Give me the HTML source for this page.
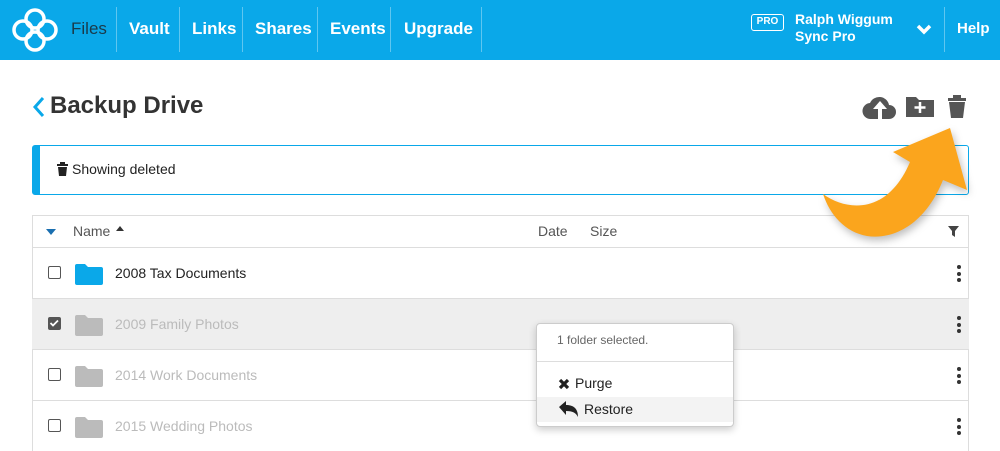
<!DOCTYPE html>
<html><head><style>
*{margin:0;padding:0;box-sizing:border-box}
body{width:1000px;height:451px;overflow:hidden;background:#fff;font-family:"Liberation Sans",sans-serif;position:relative;color:#333}
.nav{position:absolute;left:0;top:0;width:1000px;height:60px;background:#0aa8e9}
.nav .it{position:absolute;top:0;height:60px;line-height:58px;color:#fff;font-size:17px;font-weight:bold}
.sep{position:absolute;top:7px;width:1px;height:45px;background:rgba(255,255,255,.35)}
.abs{position:absolute}
.row{position:absolute;left:32px;width:937px;height:51px;border-top:1px solid #ddd;font-size:14px}
.cb{position:absolute;left:16px;top:18px;width:13px;height:13px;border:1.5px solid #555;border-radius:2px;background:#fff}
.fold{position:absolute;left:43px;top:15px;width:28px;height:22px}
.nm{position:absolute;left:83px;top:17px}
.dots{position:absolute;right:8px;top:17px;width:4px}
.dots i{display:block;width:4px;height:4px;border-radius:2px;background:#333;margin-bottom:2.5px}
</style></head><body>
<div class="nav">
 <svg class="abs" style="left:11px;top:7px" width="48" height="46" viewBox="0 0 48 46" fill="none" stroke="#fff" stroke-width="3.5">
  <circle cx="24" cy="12" r="9"/><circle cx="12" cy="23" r="9"/><circle cx="36" cy="23" r="9"/><circle cx="24" cy="34" r="9"/>
 </svg>
 <div class="it" style="left:71px;color:#1a3a4a;font-weight:normal">Files</div>
 <div class="sep" style="left:116px"></div>
 <div class="it" style="left:129px">Vault</div>
 <div class="sep" style="left:179px"></div>
 <div class="it" style="left:192px">Links</div>
 <div class="sep" style="left:242px"></div>
 <div class="it" style="left:255px">Shares</div>
 <div class="sep" style="left:317px"></div>
 <div class="it" style="left:330px">Events</div>
 <div class="sep" style="left:390px"></div>
 <div class="it" style="left:404px">Upgrade</div>
 <div class="sep" style="left:481px"></div>
 <div class="abs" style="left:751px;top:14px;width:33px;height:17px;border:1.5px solid #fff;border-radius:3px;color:#fff;font-size:10px;font-weight:bold;text-align:center;line-height:14px">PRO</div>
 <div class="abs" style="left:795px;top:11px;color:#fff;font-size:14px;font-weight:bold;line-height:17px">Ralph Wiggum<br>Sync Pro</div>
 <svg class="abs" style="left:916px;top:24px" width="16" height="11" viewBox="0 0 16 11"><path d="M2 2l6 6 6-6" stroke="#fff" stroke-width="3.5" fill="none"/></svg>
 <div class="sep" style="left:944px"></div>
 <div class="it" style="left:957px;font-size:15px">Help</div>
</div>
<svg class="abs" style="left:32px;top:96px" width="14" height="22" viewBox="0 0 14 22"><path d="M11 2L3 11l8 9" stroke="#0aa8e9" stroke-width="3" fill="none"/></svg>
<div class="abs" style="left:50px;top:92px;font-size:24px;font-weight:bold;color:#333">Backup Drive</div>
<svg class="abs" style="left:862px;top:94px" width="36" height="26" viewBox="0 0 36 26"><path d="M9 25a8 8 0 0 1-1-16 10 10 0 0 1 19 2 7 7 0 0 1 0 14z" fill="#555"/><path d="M18 7l-7 8h5v10h4V15h5z" fill="#fff"/></svg>
<svg class="abs" style="left:905px;top:94px" width="30" height="24" viewBox="0 0 30 24"><path d="M1 3h10l3 3h15v17H1z" fill="#555"/><path d="M15 8v11M9.5 13.5h11" stroke="#fff" stroke-width="2.5"/></svg>
<svg class="abs" style="left:946px;top:93px" width="22" height="26" viewBox="0 0 22 26"><path d="M2 5h18v3H2zM7 2h8v3H7z" fill="#555"/><path d="M3 9h16l-2 16H5z" fill="#555"/></svg>
<div class="abs" style="left:32px;top:145px;width:937px;height:50px;border:1px solid #0aa8e9;border-left:8px solid #0aa8e9;border-radius:3px"></div>
<svg class="abs" style="left:57px;top:162px" width="11" height="14" viewBox="0 0 11 14"><path d="M0 2h11v2H0zM3 0h5v2H3zM1 5h9l-1 9H2z" fill="#222"/></svg>
<div class="abs" style="left:72px;top:161px;font-size:14px;color:#222">Showing deleted</div>
<div class="abs" style="left:32px;top:215px;width:937px;height:236px;border:1px solid #ddd;border-bottom:none"></div>
<svg class="abs" style="left:46px;top:229px" width="10" height="6"><path d="M0 0h10L5 6z" fill="#1a6fb0"/></svg>
<div class="abs" style="left:73px;top:223px;font-size:14px;color:#555">Name</div>
<svg class="abs" style="left:116px;top:226px" width="8" height="5"><path d="M0 5h8L4 0z" fill="#333"/></svg>
<div class="abs" style="left:538px;top:223px;font-size:14px;color:#555">Date</div>
<div class="abs" style="left:590px;top:223px;font-size:14px;color:#555">Size</div>
<svg class="abs" style="left:948px;top:226px" width="11" height="11"><path d="M0 0h11L7 5v6L4 9V5z" fill="#444"/></svg>

<div class="row" style="top:247px"><div class="cb"></div>
<svg class="fold" viewBox="0 0 28 22"><path d="M0 3a2 2 0 0 1 2-2h8l3 3h13a2 2 0 0 1 2 2v14a2 2 0 0 1-2 2H2a2 2 0 0 1-2-2z" fill="#0aa8e9"/></svg>
<div class="nm" style="color:#222">2008 Tax Documents</div><div class="dots"><i></i><i></i><i></i></div></div>
<div class="row" style="top:298px;background:#eee"><div class="cb" style="background:#555;border-color:#555"><svg width="10" height="10" style="position:absolute;left:0;top:0"><path d="M1.5 5l2.5 2.5 5-5" stroke="#fff" stroke-width="1.8" fill="none"/></svg></div>
<svg class="fold" viewBox="0 0 28 22"><path d="M0 3a2 2 0 0 1 2-2h8l3 3h13a2 2 0 0 1 2 2v14a2 2 0 0 1-2 2H2a2 2 0 0 1-2-2z" fill="#bbb"/></svg>
<div class="nm" style="color:#bbb">2009 Family Photos</div><div class="dots"><i></i><i></i><i></i></div></div>
<div class="row" style="top:349px"><div class="cb"></div>
<svg class="fold" viewBox="0 0 28 22"><path d="M0 3a2 2 0 0 1 2-2h8l3 3h13a2 2 0 0 1 2 2v14a2 2 0 0 1-2 2H2a2 2 0 0 1-2-2z" fill="#bbb"/></svg>
<div class="nm" style="color:#bbb">2014 Work Documents</div><div class="dots"><i></i><i></i><i></i></div></div>
<div class="row" style="top:400px"><div class="cb"></div>
<svg class="fold" viewBox="0 0 28 22"><path d="M0 3a2 2 0 0 1 2-2h8l3 3h13a2 2 0 0 1 2 2v14a2 2 0 0 1-2 2H2a2 2 0 0 1-2-2z" fill="#bbb"/></svg>
<div class="nm" style="color:#bbb">2015 Wedding Photos</div><div class="dots"><i></i><i></i><i></i></div></div>

<div class="abs" style="left:536px;top:323px;width:198px;height:104px;background:#fff;border:1px solid #ccc;border-radius:4px;box-shadow:0 3px 8px rgba(0,0,0,.2)">
 <div class="abs" style="left:20px;top:9px;font-size:12px;color:#666">1 folder selected.</div>
 <div class="abs" style="left:0;top:37px;width:196px;height:1px;background:#ddd"></div>
 <svg class="abs" style="left:21px;top:54px" width="12" height="12"><path d="M2 2l8 8M10 2l-8 8" stroke="#222" stroke-width="3.2"/></svg>
 <div class="abs" style="left:38px;top:51px;font-size:14px;color:#222">Purge</div>
 <div class="abs" style="left:0;top:73px;width:196px;height:25px;background:#f3f3f3"></div>
 <svg class="abs" style="left:22px;top:77px" width="20" height="17" viewBox="0 0 20 17"><path d="M0 6l7-6v4c7 0 12 3 12 12-2-4-5-6-12-6v4z" fill="#222"/></svg>
 <div class="abs" style="left:47px;top:77px;font-size:14px;color:#222">Restore</div>
</div>

<svg class="abs" style="left:0;top:0;filter:drop-shadow(2px 4px 4px rgba(0,0,0,.25))" width="1000" height="451">
 <path d="M823 194 C848 212 888 214 910 162 L893 152 L950 128 L967 190 L943 180 C925 225 893 240 867 236 C845 232 830 215 823 194 Z" fill="#fba51d"/>
</svg>
</body></html>
